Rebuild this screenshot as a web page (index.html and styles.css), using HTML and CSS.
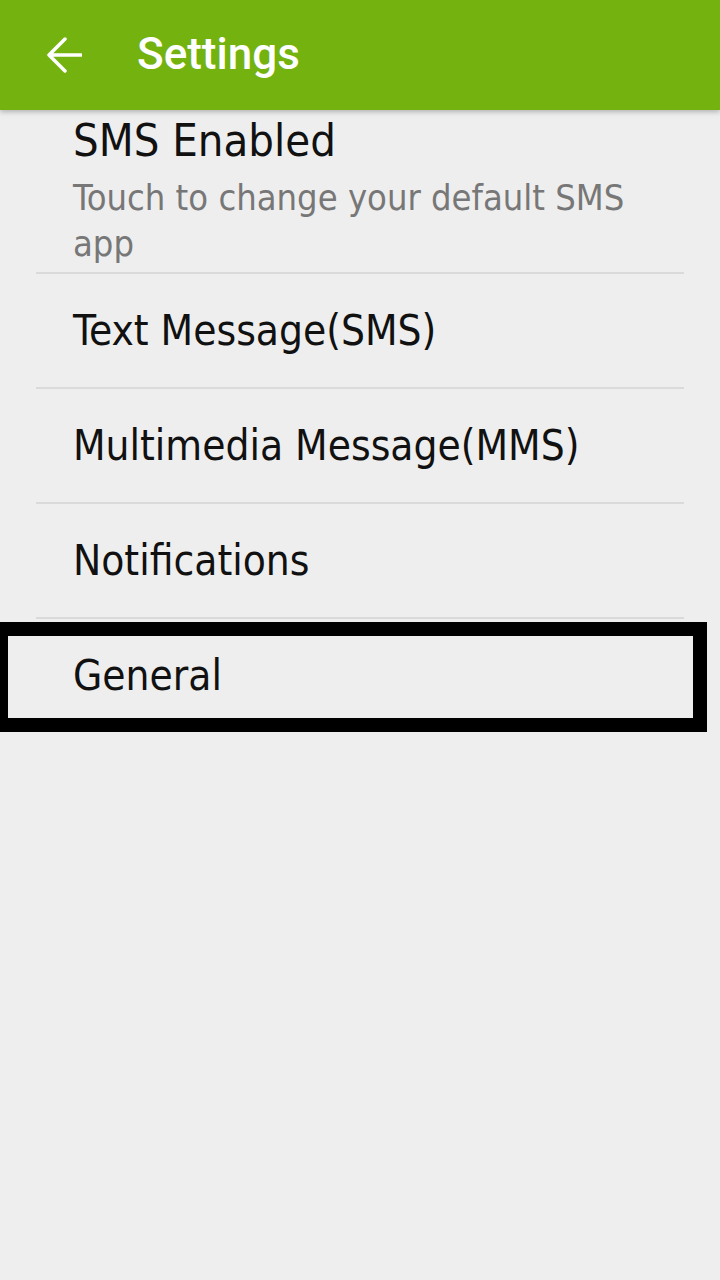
FILE: index.html
```html
<!DOCTYPE html>
<html lang="en">
<head>
    <meta charset="UTF-8">
    <meta name="viewport" content="width=device-width, initial-scale=1.0">
    <title>Settings</title>
    <link rel="stylesheet" href="styles.css">
</head>
<body>

    <header class="app-bar">
        <svg class="back" width="36" height="38" viewBox="0 0 36 38">
            <path d="M35 19 H3 M19 3 L3 19 L19 35" fill="none" stroke="#fff" stroke-width="3.5" stroke-linecap="round" stroke-linejoin="round"/>
        </svg>
        <h1>Settings</h1>
    </header>

    <ul class="prefs">
        <li class="pref pref-two">
            <div class="pref-title pref-title-big">SMS Enabled</div>
            <div class="pref-summary">Touch to change your default SMS app</div>
        </li>
        <li class="pref"><div class="pref-title">Text Message(SMS)</div></li>
        <li class="pref"><div class="pref-title">Multimedia Message(MMS)</div></li>
        <li class="pref"><div class="pref-title">Notifications</div></li>
        <li class="pref pref-marked"><div class="pref-title">General</div></li>
    </ul>

</body>
</html>
```

FILE: styles.css
```css
body {
    margin: 0;
    background: #eeeeee;
    font-family: "DejaVu Sans Condensed", "DejaVu Sans", sans-serif;
    font-stretch: condensed;
    height: 1280px;
    overflow: hidden;
}

.app-bar {
    height: 110px;
    background: #74b20f;
    display: flex;
    align-items: center;
    padding-left: 46px;
    box-shadow: 0 2px 5px rgba(0,0,0,0.25);
    position: relative;
    z-index: 1;
}

.back {
    display: block;
    margin-right: 55px;
}

.app-bar h1 {
    margin: 0;
    color: #fff;
    font-family: Roboto, "Noto Sans", sans-serif;
    font-stretch: normal;
    font-weight: 500;
    font-size: 44px;
    padding-bottom: 2px;
}

.prefs {
    list-style: none;
    margin: 0 36px;
    padding: 0;
    position: relative;
}

.pref {
    height: 113px;
    border-bottom: 2px solid #dadada;
    padding-left: 37px;
    display: flex;
    flex-direction: column;
    justify-content: center;
}

.pref-two {
    height: auto;
    padding-top: 4px;
    padding-bottom: 5px;
    justify-content: flex-start;
}

.pref-title {
    font-size: 42px;
    line-height: 54px;
    color: #111;
}

.pref-title-big {
    font-size: 45px;
}

.pref-summary {
    margin-top: 7px;
    font-size: 36px;
    line-height: 46px;
    color: #777;
    padding-right: 40px;
}

.pref-marked {
    border-bottom: none;
    position: relative;
}

.pref-marked::after {
    content: "";
    position: absolute;
    left: -36px;
    right: -23px;
    top: 3px;
    height: 110px;
    border: 14px solid #000;
    border-left-width: 8px;
    box-sizing: border-box;
}
```
